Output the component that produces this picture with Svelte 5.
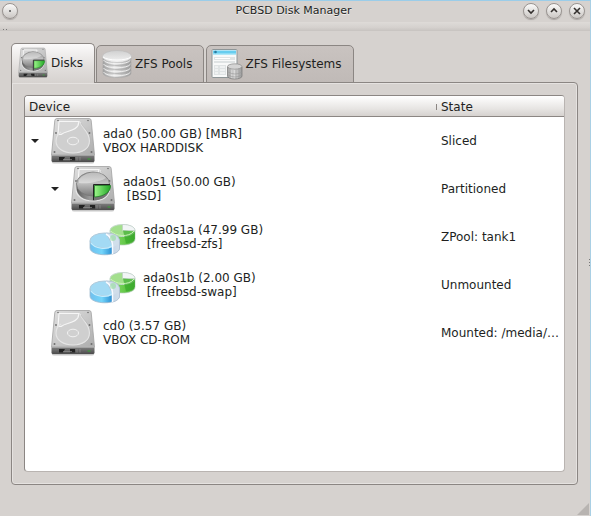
<script>
  let active = $state('Disks');
  const tabs = ['Disks', 'ZFS Pools', 'ZFS Filesystems'];
  const devices = [
    { level: 0, open: true, icon: 'drive', name: 'ada0 (50.00 GB) [MBR]', detail: 'VBOX HARDDISK', status: 'Sliced' },
    { level: 1, open: true, icon: 'slice', name: 'ada0s1 (50.00 GB)', detail: ' [BSD]', status: 'Partitioned' },
    { level: 2, open: false, icon: 'partition', name: 'ada0s1a (47.99 GB)', detail: ' [freebsd-zfs]', status: 'ZPool: tank1' },
    { level: 2, open: false, icon: 'partition', name: 'ada0s1b (2.00 GB)', detail: ' [freebsd-swap]', status: 'Unmounted' },
    { level: 0, open: false, icon: 'drive', name: 'cd0 (3.57 GB)', detail: 'VBOX CD-ROM', status: 'Mounted: /media/…' }
  ];
</script>

{#snippet drive(sliced)}
  <svg class="icon" viewBox="0 0 48 48" aria-hidden="true">
    <path d="M3 44h42v1.5q0 1-2 1H5q-2 0-2-1z" fill="#000" opacity=".22" />
    <path d="M8 1.5h32q2 0 2.200 2L45.500 38H2.500L5.800 3.500q.2-2 2.200-2z" fill="url(#metal)" stroke="#a2a2a2" stroke-width=".8" />
    <path d="M2.500 37.500h43v6q0 1.500-1.500 1.500H4q-1.500 0-1.500-1.500z" fill="url(#front)" />
    <path d="M2.500 38h43" stroke="#ddd" stroke-width=".8" />
    <path d="M10 40h6l-2 3.500h-4zM21 40h5v3.500h-5z" fill="#222" />
    <path d="M14 42.500h9M28 40v3.500M31 40v3.500" stroke="#999" stroke-width=".6" />
    <path d="M38.500 42h3" stroke="#35a533" stroke-width="1.200" />
    <path d="M13 4h17c2 6 11 10 11 20 0 8-8 12-17 12S7 32 7 24c0-12 15-8 17-20" fill="#cfcfcf" />
    <path d="M10 4.500h20l-1 4c-3 6-12 5-17 9H9z" fill="#d6d6d6" stroke="#f6f6f6" stroke-width="1.200" />
    <path d="M31 5c2 6 9.500 10 9.500 19 0 7.500-7 12-16.500 12S7 31.500 7 24c0-3.500 2-7 5-9" fill="none" stroke="#e4e4e4" stroke-width="1.200" />
    <path d="M32 6c3 6 9.500 9 9.500 18 0 7-5 11-10 12" fill="none" stroke="#b4b4b4" stroke-width=".6" />
    <ellipse cx="24" cy="24" rx="5.500" ry="3.800" fill="#d0d0d0" stroke="#f2f2f2" />
    <g fill="#6e6e6e"><circle cx="9" cy="3.500" r=".8" /><circle cx="39" cy="3.500" r=".8" /><circle cx="7" cy="16" r=".9" /><circle cx="40.500" cy="16" r=".9" /><circle cx="5.500" cy="35" r="1" /><circle cx="42.500" cy="35" r="1" /></g>
    {#if sliced}
      <path d="M7.500 18v5c0 7 7 12.500 16.500 12.500S40.500 30 40.500 23v-5z" fill="url(#pieside)" />
      <ellipse cx="24" cy="19" rx="16.500" ry="12" fill="url(#pie)" stroke="#777" stroke-width=".7" />
      <path d="M10 15C15 6 32 5 37 13c-7 4-18 6-27 5z" fill="#fff" opacity=".38" />
      <path d="M24 20h16.500v3c0 7-7 12-16.500 12.500z" fill="#747474" />
      <path d="M25.500 20.500h16c.5 6-6 11-16 11.500z" fill="url(#greenpie)" stroke="#157b1b" stroke-width=".7" />
      <path d="M24.500 35V19.500H41" fill="none" stroke="#252525" />
    {/if}
  </svg>
{/snippet}

{#snippet partition()}
  <svg class="icon" viewBox="0 -3 48 48" aria-hidden="true">
    <path d="M21 15v8c0 8 25 8 25 0v-8z" fill="url(#greenside)" stroke="#b5cfba" stroke-width=".7" />
    <ellipse cx="33.500" cy="14.500" rx="12.500" ry="6" fill="#a3df8d" stroke="#c5d9cc" />
    <path d="M33.500 14.500v-6c7.500 0 12.500 2.500 12.500 6z" fill="#f2f5f6" stroke="#bcc9c6" stroke-width=".6" />
    <path d="m34 14.500 12 1v7q-2 4-9 5z" fill="#36a928" opacity=".65" />
    <path d="M22 15c4 5 18 7 23 0" fill="none" stroke="#c9f3b7" />
    <path d="M1 25v7c0 9 29.500 9 29.500 0v-7z" fill="url(#blueside)" stroke="#9fbacf" stroke-width=".8" />
    <ellipse cx="15.700" cy="24.500" rx="14.700" ry="7.500" fill="#a3daf4" stroke="#b1cadb" />
    <path d="M17 17c8 0 13.500 3 13.500 8v7c0 3-3 5-7 6v-9z" fill="#d5dfea" stroke="#aebfd1" stroke-width=".7" opacity=".9" />
    <path d="M17 18q6 3 6.500 11v9" fill="none" stroke="#f8fbff" stroke-width="1.500" />
    <circle cx="24" cy="22" r="3" fill="#95dc9b" opacity=".6" />
    <path d="M2 27c4 6 16 7 21 3" fill="none" stroke="#c2edff" stroke-width="1.200" />
  </svg>
{/snippet}

{#snippet pools()}
  <svg class="icon" viewBox="0 0 32 32" aria-hidden="true">
    {#each [22, 18, 14, 10] as y}
      <path d="M2 {y}v3c0 6 28 6 28 0v-3z" fill="url(#poolside)" stroke="#a2a2a2" stroke-width=".6" />
      <path d="M2.500 {y + 2}c2 5 25 5 27 0" fill="none" stroke="#f5f5f5" stroke-width=".9" />
    {/each}
    <ellipse cx="16" cy="8.500" rx="14.500" ry="6" fill="url(#pooltop)" stroke="#bbb" stroke-width=".6" />
    <path d="M2 9c5 4 23 4 28 0" fill="none" stroke="#fff" />
  </svg>
{/snippet}

{#snippet files()}
  <svg class="icon" viewBox="0 0 32 32" aria-hidden="true">
    <rect x="1" y="1.500" width="25" height="28" rx="1" fill="#f8f9f9" stroke="#8e9698" />
    <path d="M2 2.500h23v4H2z" fill="#67cdef" /><path d="M2 6h23" stroke="#b5ebfa" />
    <circle cx="4.500" cy="4" r="1.300" fill="#287ba0" />
    <path d="M3 9h21v3H3zM3 13h21v2H3zM3 17h12v10H3z" fill="#dfe3e4" />
    <path d="M4 10.500h15M4 19h3M9 19h5M4 22h3M9 22h5M4 25h3M9 25h5" stroke="#fff" />
    <path d="M16.500 19v9c0 4 14.500 4 14.500 0v-9z" fill="url(#poolside)" stroke="#777" stroke-width=".7" />
    <ellipse cx="23.700" cy="18.500" rx="7.200" ry="2.700" fill="#d4d4d4" stroke="#888" stroke-width=".7" />
    <path d="M19 21v9M22 22v9M25 22v9M28 21v9M17 24q7 4 14 0M17 27q7 4 14 0" fill="none" stroke="#999" stroke-width=".6" />
  </svg>
{/snippet}

<svg class="defs" width="0" height="0" aria-hidden="true">
  <defs>
    <linearGradient id="metal" x2="1" y2="1"><stop stop-color="#dedede" /><stop offset=".5" stop-color="#c9c9c9" /><stop offset="1" stop-color="#acacac" /></linearGradient>
    <linearGradient id="front" x2="0" y2="1"><stop stop-color="#858585" /><stop offset="1" stop-color="#4b4b4b" /></linearGradient>
    <linearGradient id="pie" x2="0" y2="1"><stop stop-color="#8f8f8f" /><stop offset=".45" stop-color="#c2c2c2" /><stop offset="1" stop-color="#7a7a7a" /></linearGradient>
    <linearGradient id="pieside"><stop stop-color="#5c5c5c" /><stop offset=".4" stop-color="#9a9a9a" /><stop offset="1" stop-color="#555" /></linearGradient>
    <linearGradient id="greenpie" x2="1"><stop stop-color="#9df58a" /><stop offset="1" stop-color="#22a626" /></linearGradient>
    <linearGradient id="greenside"><stop stop-color="#8dde70" /><stop offset=".6" stop-color="#64c848" /><stop offset="1" stop-color="#49a938" /></linearGradient>
    <linearGradient id="blueside"><stop stop-color="#71bfed" /><stop offset=".4" stop-color="#74d5fa" /><stop offset=".75" stop-color="#2c8fd2" /><stop offset="1" stop-color="#b9d3e6" /></linearGradient>
    <linearGradient id="poolside"><stop stop-color="#a2a2a2" /><stop offset=".4" stop-color="#e6e6e6" /><stop offset="1" stop-color="#999" /></linearGradient>
    <linearGradient id="pooltop" x2="0" y2="1"><stop stop-color="#d0d0d0" /><stop offset="1" stop-color="#f3f3f3" /></linearGradient>
  </defs>
</svg>

<main class="window">
  <header class="titlebar">
    <button class="round" aria-label="Window menu"><svg viewBox="0 0 14 14"><circle cx="7" cy="7" r="1" fill="#555" /></svg></button>
    <h1>PCBSD Disk Manager</h1>
    <div class="controls">
      <button class="round" aria-label="Minimize"><svg viewBox="0 0 14 14"><path d="m4 6 3 3 3-3" /></svg></button>
      <button class="round" aria-label="Maximize"><svg viewBox="0 0 14 14"><path d="m4 8 3-3 3 3" /></svg></button>
      <button class="round" aria-label="Close"><svg viewBox="0 0 14 14"><path d="m4 4 6 6m0-6-6 6" /></svg></button>
    </div>
  </header>
  <div class="toolbar"><i></i><i></i></div>

  <div class="tabs" role="tablist">
    {#each tabs as tab}
      <button class="tab" class:active={active === tab} role="tab" aria-selected={active === tab} onclick={() => (active = tab)}>
        {#if tab === 'Disks'}{@render drive(true)}{:else if tab === 'ZFS Pools'}{@render pools()}{:else}{@render files()}{/if}
        <span>{tab}</span>
      </button>
    {/each}
  </div>

  <section class="panel" role="tabpanel" aria-label={active}>
    <div class="tree">
      <table>
        <thead><tr><th>Device</th><th class="state">State</th></tr></thead>
        <tbody>
          {#each devices as device}
            <tr>
              <td>
                <div class="device level{device.level}">
                  <span class="branch">{#if device.open}<svg viewBox="0 0 8 4"><path d="M0 0h8L4 4z" fill="#222" /></svg>{/if}</span>
                  {#if device.icon === 'partition'}{@render partition()}{:else}{@render drive(device.icon === 'slice')}{/if}
                  <span class="label">{device.name}<br />{device.detail}</span>
                </div>
              </td>
              <td class="state">{device.status}</td>
            </tr>
          {/each}
        </tbody>
      </table>
    </div>
  </section>
  <span class="handle" aria-hidden="true"><i></i><i></i><i></i></span>
  <svg class="grip" viewBox="0 0 12 12" aria-hidden="true"><path d="M12 0v12H0z" fill="#b8b4b1" /></svg>
</main>

<style>
  :global(body) { margin: 0; }
  .defs { position: absolute; }
  .window {
    box-sizing: border-box;
    position: relative;
    display: flex;
    flex-direction: column;
    height: 100vh;
    padding-bottom: 31px;
    border-top: 1px solid #9bcde9;
    border-right: 1px solid #a9cfe4;
    background: #d6d2cf;
    color: #221f1e;
    font: 12px/14px "DejaVu Sans", sans-serif;
  }
  button { font: inherit; color: inherit; cursor: pointer; }
  .titlebar {
    display: grid;
    grid-template-columns: 64px 1fr 64px;
    align-items: center;
    height: 21px;
    padding: 0 5px 2px 2px;
    box-sizing: border-box;
  }
  h1 {
    margin: 0;
    font-size: 11px;
    font-weight: 400;
    text-align: center;
    text-shadow: 0 1px #eeecea;
  }
  .controls { display: flex; gap: 7px; justify-content: flex-end; }
  .round {
    width: 16px;
    height: 16px;
    padding: 0;
    border: 1px solid #999491;
    border-radius: 50%;
    background: linear-gradient(#fbfbfa, #cbc7c4);
    box-shadow: 0 1px 1px #aaa5a2;
  }
  .round svg { display: block; width: 14px; height: 14px; }
  .round path { fill: none; stroke: #34302e; stroke-width: 1.6; }
  .toolbar {
    display: flex;
    gap: 2px;
    align-items: flex-end;
    height: 9px;
    padding: 0 3px 1px;
    box-sizing: border-box;
    background: linear-gradient(#dedbd8, #d5d1ce 60%, #c7c3c0);
  }
  .toolbar i { width: 1px; height: 1px; background: #777; }
  .tabs {
    display: flex;
    gap: 2px;
    align-items: flex-end;
    height: 40px;
    margin: 12px 12px -1px 11px;
  }
  .tab {
    box-sizing: border-box;
    display: flex;
    gap: 2px;
    align-items: center;
    height: 38px;
    padding: 0 11px 0 4px;
    border: 1px solid #8b8683;
    border-radius: 5px 5px 0 0;
    background: linear-gradient(#c9c3c0, #c0bab7);
    line-height: 14px;
    white-space: nowrap;
  }
  .tab .icon { width: 32px; height: 32px; }
  .tab.active {
    z-index: 1;
    height: 40px;
    padding: 0 11px 2px 5px;
    margin-right: -1px;
    border-bottom: 0;
    background: linear-gradient(#fbfafa, #e2dfdd 60%, #d6d2cf);
  }
  .panel {
    flex: 1;
    display: flex;
    min-height: 0;
    margin: 0 12px 0 11px;
    padding: 12px;
    border: 1px solid #8b8683;
    border-radius: 0 4px 4px 4px;
    box-shadow: inset 0 0 0 1px #e5e2e0;
  }
  .tree {
    flex: 1;
    min-width: 0;
    overflow: hidden;
    border: 1px solid #b9b4b1;
    border-top-color: #8b8683;
    border-left-color: #8b8683;
    border-radius: 4px;
    background: #fff;
  }
  table { width: 100%; table-layout: fixed; border-collapse: separate; border-spacing: 0; }
  thead { background: linear-gradient(#fff, #e7e5e3 60%, #d3cfcc); }
  th {
    box-sizing: border-box;
    height: 21px;
    padding: 2px 4px 0;
    border-bottom: 1px solid #8b8683;
    font-weight: 400;
    text-align: left;
  }
  th.state {
    width: 128px;
    background: linear-gradient(#8b8683, #8b8683) 0 8px / 1px 6px no-repeat;
  }
  td { height: 48px; padding: 0; }
  th.state, td.state { padding-left: 5px; }
  td.state { white-space: nowrap; }
  .device { display: flex; align-items: center; }
  .level1 { padding-left: 20px; }
  .level2 { padding-left: 40px; }
  .branch { display: flex; justify-content: center; flex: none; width: 20px; margin-right: 4px; }
  .branch svg { width: 8px; height: 4px; }
  .icon { display: block; flex: none; width: 48px; height: 48px; }
  .label { margin-left: 6px; white-space: pre; }
  .handle {
    position: absolute;
    top: 50%;
    right: 0;
    display: grid;
    gap: 2px;
  }
  .handle i { width: 1px; height: 1px; background: #777; }
  .grip { position: absolute; right: 1px; bottom: 1px; width: 12px; height: 12px; }
</style>
